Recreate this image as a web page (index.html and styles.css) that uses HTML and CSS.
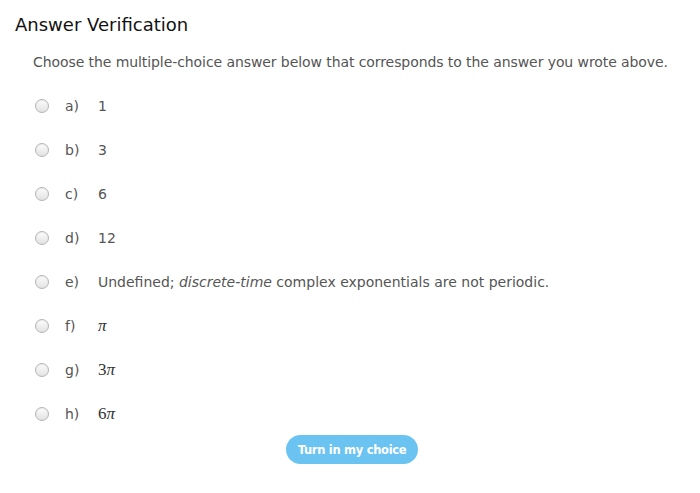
FILE: index.html
```html
<!DOCTYPE html>
<html>
<head>
<meta charset="utf-8">
<link rel="stylesheet" href="styles.css">
</head>
<body>
<div class="page">
  <h1 class="title">Answer Verification</h1>
  <p class="prompt">Choose the multiple-choice answer below that corresponds to the answer you wrote above.</p>
  <ul class="options">
    <li class="option"><span class="radio"></span><span class="letter">a)</span><span class="value">1</span></li>
    <li class="option"><span class="radio"></span><span class="letter">b)</span><span class="value">3</span></li>
    <li class="option"><span class="radio"></span><span class="letter">c)</span><span class="value">6</span></li>
    <li class="option"><span class="radio"></span><span class="letter">d)</span><span class="value">12</span></li>
    <li class="option"><span class="radio"></span><span class="letter">e)</span><span class="value">Undefined; <em>discrete-time</em> complex exponentials are not periodic.</span></li>
    <li class="option"><span class="radio"></span><span class="letter">f)</span><span class="value math"><i>π</i></span></li>
    <li class="option"><span class="radio"></span><span class="letter">g)</span><span class="value math">3<i>π</i></span></li>
    <li class="option"><span class="radio"></span><span class="letter">h)</span><span class="value math">6<i>π</i></span></li>
  </ul>
  <div class="actions"><button class="submit">Turn in my choice</button></div>
</div>
</body>
</html>
```
FILE: styles.css
```css
html, body { margin: 0; padding: 0; background: #fff; }
body { font-family: "DejaVu Sans", Verdana, sans-serif; }
.page { padding: 14px 15px 0 15px; width: 670px; }
.title { font-size: 18px; font-weight: normal; color: #111; margin: 0; line-height: 22px; }
.prompt { font-size: 14px; letter-spacing: -0.08px; color: #555; margin: 17px 0 0 18px; line-height: 18px; }
.options { list-style: none; margin: 13px 0 0 0; padding: 0 0 0 20px; }
.option { display: flex; align-items: center; height: 44px; font-size: 14px; color: #555; }
.radio { width: 12px; height: 12px; border-radius: 50%; border: 1px solid #b5b5b5; background: linear-gradient(#fdfdfd, #e2e2e2); box-shadow: inset 0 1px 1px rgba(0,0,0,0.08); flex: none; }
.letter { margin-left: 16px; width: 33px; }
.math { font-family: "Liberation Serif", "Times New Roman", serif; font-size: 17px; color: #333; }
.math i { font-style: italic; }
.actions { display: flex; justify-content: center; margin-top: 0; padding-left: 4px; }
.submit { font-family: "DejaVu Sans", Verdana, sans-serif; font-weight: bold; font-size: 11.5px; letter-spacing: -0.3px; color: #fff; background: #6bc3f2; border: none; border-radius: 15px; height: 29px; padding: 0 12px; margin-top: -1px; }
```
